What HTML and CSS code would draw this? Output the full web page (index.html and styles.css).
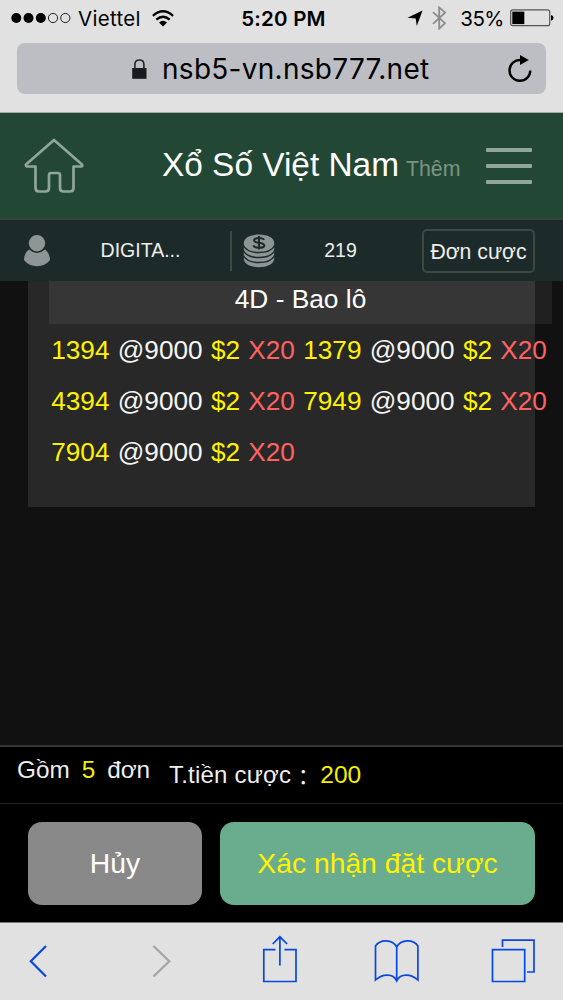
FILE: index.html
```html
<!DOCTYPE html>
<html lang="vi">
<head>
<meta charset="utf-8">
<title>Xổ Số Việt Nam</title>
<link rel="stylesheet" href="styles.css">
</head>
<body>
<div class="phone">
  <div class="browser-top">
    <div class="status">
      <div class="status-left">
        <svg width="61" height="12" viewBox="0 0 61 12"><g fill="#000"><circle cx="5.3" cy="6" r="5"/><circle cx="17.5" cy="6" r="5"/><circle cx="29.8" cy="6" r="5"/></g><g fill="none" stroke="#222" stroke-width="1"><circle cx="42" cy="6" r="4.6"/><circle cx="54.3" cy="6" r="4.6"/></g></svg>
        <span class="carrier">Viettel</span>
        <svg class="wifi" width="22" height="17" viewBox="0 0 22 17"><g fill="none" stroke="#000" stroke-width="2.3"><path d="M.9 5.800Q11-3.200 21.100 5.800"/><path d="M4.300 9.700Q11 3.700 17.700 9.700"/></g><path d="M7 12.400Q11 9 15 12.400L11 16.600Z"/></svg>
      </div>
      <div class="clock">5:20 PM</div>
      <div class="status-right">
        <svg width="16" height="17" viewBox="0 0 16 17"><path d="M15.500.5 9.800 16 8.700 8.500.5 7.800Z"/></svg>
        <svg class="bluetooth" width="14" height="24" viewBox="0 0 14 24"><path d="M1 6.200 13 17.200 7.200 22.600V1.400L13 6.600 1 17.800" fill="none" stroke="#8c8c8c" stroke-width="1.800"/></svg>
        <span class="percent">35%</span>
        <svg class="battery" width="44" height="18" viewBox="0 0 44 18"><rect x=".7" y=".9" width="39" height="15.800" rx="2" fill="none" stroke="#555" stroke-width="1.200"/><rect x="2.300" y="2.600" width="12" height="12.500"/><path d="M41 6q2.500.5 2.500 2.800T41 11.700Z"/></svg>
      </div>
    </div>
    <div class="address">
      <svg class="lock" width="15" height="20" viewBox="0 0 15 20"><rect x=".2" y="9" width="14.300" height="10.800" fill="#1b1b1d"/><path d="M2.900 10V5.500Q2.900 1 7.400 1t4.500 4.500V10" fill="none" stroke="#252527" stroke-width="1.600"/></svg>
      <span class="url">nsb5-vn.nsb777.net</span>
      <svg class="reload" width="24" height="28" viewBox="0 0 24 28"><path d="M12.500 5A10.400 10.400 0 1 0 22.300 15.400" fill="none" stroke="#000" stroke-width="2.400"/><path d="M12 0 20.800 5 12 10Z"/></svg>
    </div>
  </div>

  <header class="header">
    <svg class="home" width="60" height="56" viewBox="0 0 60 56"><path d="M30 2 2 26.500Q1.500 28.500 4 28.500H11.500V50Q11.500 53.500 15 53.500H21.500Q25 53.500 25 50V37Q25 35 27 35H34Q36 35 36 37V50Q36 53.500 39.500 53.500H46Q49.500 53.500 49.500 50V28.500H57Q59 28.500 58 26.500Z" fill="none" stroke="#90a69a" stroke-width="2.700" stroke-linejoin="round"/></svg>
    <h1 class="title">Xổ Số Việt Nam</h1>
    <span class="more">Thêm</span>
    <div class="menu"><i></i><i></i><i></i></div>
  </header>

  <section class="account">
    <svg class="user" width="28" height="32" viewBox="0 0 28 32" fill="#8e9595"><circle cx="14" cy="8.300" r="8.200"/><path d="M6 14.500Q14 21.500 22 14.500C25 16.500 27 21 27 25Q22 31.200 14 31.200T1 25C1 21 3 16.500 6 14.500Z"/></svg>
    <span class="name">DIGITA...</span>
    <span class="divider"></span>
    <svg class="coins" width="32" height="34" viewBox="0 0 32 34"><path d="M.8 9C.8 4 7 .5 16 .5S31.200 4 31.200 9V26Q28.500 33.200 16 33.200T.8 26Z" fill="#8e9595"/><path d="M0 11Q3.500 18.500 16 18.500T32 11M0 16Q3.500 23.500 16 23.500T32 16M0 21Q3.500 28.500 16 28.500T32 21" fill="none" stroke="#1c2b2a" stroke-width="1.500"/><path d="M21 6Q20.200 4 16 4T11 6.200Q11 8.300 16 8.700T21.300 11.500Q21 13.800 16 13.800T10.500 11.300M16 2V15.600" fill="none" stroke="#1c2b2a" stroke-width="2"/></svg>
    <span class="balance">219</span>
    <button class="orders">Đơn cược</button>
  </section>

  <main class="content">
    <div class="panel">
      <h2 class="game">4D - Bao lô</h2>
      <div class="bets">
        <div class="bet"><b>1394</b><span>@9000</span><b>$2</b><em>X20</em></div>
        <div class="bet"><b>1379</b><span>@9000</span><b>$2</b><em>X20</em></div>
        <div class="bet"><b>4394</b><span>@9000</span><b>$2</b><em>X20</em></div>
        <div class="bet"><b>7949</b><span>@9000</span><b>$2</b><em>X20</em></div>
        <div class="bet"><b>7904</b><span>@9000</span><b>$2</b><em>X20</em></div>
      </div>
    </div>
  </main>

  <section class="summary">
    <div class="count"><span>Gồm</span><b>5</b><span>đơn</span></div>
    <div class="total"><span class="total-label">T.tiền cược</span><span class="colon">：</span><b>200</b></div>
  </section>
  <section class="actions">
    <button class="cancel">Hủy</button>
    <button class="confirm">Xác nhận đặt cược</button>
  </section>

  <nav class="toolbar">
    <svg width="563" height="77" viewBox="0 0 563 77" fill="none" stroke="#0848e0" stroke-width="1.700">
      <path d="M46 23 30.800 38.200 46 53.500" stroke-width="2.200"/>
      <path d="M153.500 23 169.300 38.200 153.500 53.500" stroke="#a4a4a4" stroke-width="2.200"/>
      <path d="M275.500 26.700H263.800V58.500H296V26.700H284.500M279.900 42.500V14.500M272.700 21 279.900 13.800 287.100 21"/>
      <path d="M396.700 24C392.500 16 380 16 375.500 23V57C382 51 393 49.500 396.700 58C400.500 49.500 411.500 51 417.900 57V23C413.500 16 401 16 396.700 24V58"/>
      <path d="M492.500 26.700H524.700V58.500H492.500ZM502.500 24V17.200H534V49H527"/>
    </svg>
  </nav>
</div>
</body>
</html>
```

FILE: styles.css
```css
* { box-sizing: border-box; }
body { margin: 0; background: #111; font-family: "Liberation Sans", Arial, sans-serif; color: #fff; }
svg { display: block; flex: none; }
h1, h2 { margin: 0; font-weight: 400; }
b, em { font-weight: 400; font-style: normal; }
button { padding: 0; font-family: inherit; color: inherit; flex: none; white-space: nowrap; }
.phone { width: 563px; height: 1000px; overflow: hidden; display: flex; flex-direction: column; }
.phone > * { flex: none; }

.browser-top { height: 113px; background: #e1e1e1; border-bottom: 1px solid #a5aba8; color: #000; font-family: Inter, sans-serif; }
.status { display: grid; grid-template-columns: 1fr 90px 1fr; height: 43px; padding: 0 10px 7px 11px; align-items: center; }
.status-left, .status-right { display: flex; align-items: center; }
.status-right { justify-content: flex-end; }
.carrier { margin-left: 6px; font-size: 20.500px; letter-spacing: .3px; }
.wifi { margin-left: 11px; }
.clock { padding-left: 3px; font-size: 20.500px; font-weight: 600; letter-spacing: .2px; text-align: center; white-space: nowrap; }
.status-right svg:first-child { margin-right: -1px; }
.bluetooth { margin-left: 10px; }
.percent { margin-left: 14px; font-size: 20.500px; letter-spacing: -.5px; }
.battery { margin-left: 6px; margin-right: -1px; }
.address { display: flex; align-items: center; width: 529px; height: 51px; margin-left: 17px; padding: 0 14px 0 115px; border-radius: 8px; background: #bdbec3; }
.url { margin-left: 15px; font-size: 28px; letter-spacing: .28px; }
.reload { margin-left: auto; }

.header { display: flex; align-items: center; height: 107px; padding: 0 31px 0 24px; background: #224735; border-bottom: 2px solid #38433d; }
.title { margin-top: -2px; margin-left: 78px; font-size: 33.400px; white-space: nowrap; line-height: 38px; }
.more { margin-left: 7px; font-size: 21.300px; color: #7b9484; padding-top: 7px; }
.menu { display: grid; gap: 12px; width: 46px; margin-left: auto; }
.menu i { height: 4px; background: #90a69a; border-radius: 1px; }

.account { display: flex; align-items: center; height: 61px; padding: 0 28px 0 23px; background: #1c2b2a; }
.name { width: 179px; padding-left: 0; text-align: center; font-size: 19.500px; color: #eee; }
.divider { width: 2px; height: 40px; background: #3a4c3f; }
.coins { margin-left: 11px; }
.balance { width: 131px; text-align: center; font-size: 19.500px; color: #eee; }
.orders { width: 113px; height: 44px; margin-left: 16px; padding-top: 2px; border: 2px solid #3a4c41; border-radius: 5px; background: none; font-size: 21.200px; color: #eee; }

.content { height: 464px; background: #111; }
.panel { width: 507px; height: 226px; margin-left: 28px; padding-left: 21px; background: #282828; }
.game { width: 503px; height: 43px; background: rgba(255,255,255,.065); font-size: 26.300px; line-height: 36px; text-align: center; }
.bets { display: grid; grid-template-columns: 252px 252px; grid-auto-rows: 51px; padding: 1px 0 0 2.200px; width: 506.200px; }
.bet { display: flex; gap: 8.300px; align-items: center; font-size: 26.200px; color: #f5f5f5; }
.bet b { color: #fff200; }
.bet em { color: #ff6262; }

.summary { display: flex; height: 59px; background: #000; border-top: 2px solid #333; border-bottom: 1px solid #242424; font-size: 24px; color: #eee; }
.summary b { color: #f4ee00; }
.count { display: flex; gap: 12px; width: 169px; padding: 9px 0 0 17px; font-size: 24.300px; line-height: 28px; }
.total { display: flex; padding-top: 14px; line-height: 28px; white-space: nowrap; }
.total-label { letter-spacing: .22px; }
.colon { width: 24px; font-size: 22px; text-align: center; font-family: "Noto Sans CJK JP", sans-serif; }
.total b { margin-left: 5px; font-size: 24.500px; }

.actions { display: flex; gap: 18px; height: 118px; padding: 18px 28px 0; background: #000; }
.actions button { height: 83px; border: 0; border-radius: 14px; font-size: 28.300px; }
.cancel { width: 174px; background: #898989; }
.actions .confirm { width: 315px; background: #6aac8e; color: #fff200; }

.toolbar { height: 78px; background: #e1e1e1; border-top: 1px solid #777; }
```
